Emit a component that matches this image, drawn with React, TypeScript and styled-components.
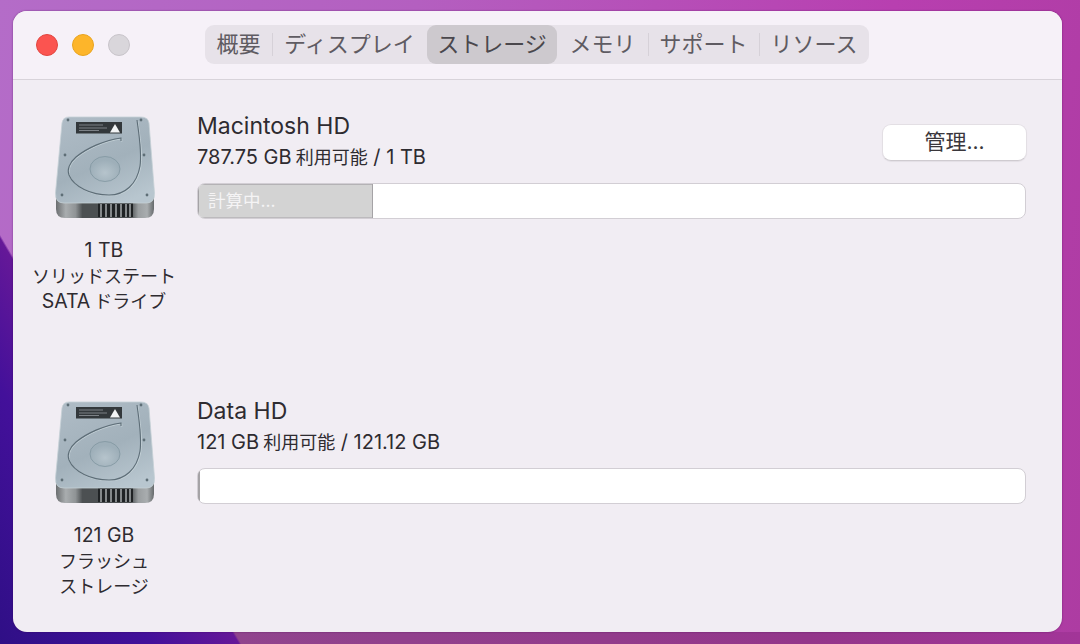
import React from "react";
import styled, { createGlobalStyle } from "styled-components";

const Global = createGlobalStyle`
  html, body { margin: 0; padding: 0; }
  body { font-family: Inter, "Noto Sans CJK JP", sans-serif; }
`;

const Page = styled.div`
  width: 1080px;
  height: 644px;
  box-sizing: border-box;
  padding: 11px 18px 12px 13px;
  overflow: hidden;
  background:
    linear-gradient(59.5deg, #2f0f86 0, #43109a 130px, #651898 206px, rgba(101, 24, 152, 0) 208px),
    linear-gradient(to right, #8f4a8e, #93368a 75%, #a23598) bottom / 100% 12px no-repeat,
    linear-gradient(100deg, #b46cc8 0%, #b45fc0 35%, #b83fb0 75%, #ad3ca2 100%);
`;

const Window = styled.div`
  height: 100%;
  border-radius: 14px;
  background: #f1edf3;
  overflow: hidden;
  box-shadow: 0 0 2px rgba(60, 0, 70, 0.55);
  color: #2e2b30;
`;

const TitleBar = styled.header`
  height: 69px;
  box-sizing: border-box;
  border-bottom: 1px solid #d8d3da;
  background: #f6f1f8;
  display: flex;
  align-items: flex-start;
  padding: 14px 0 0 23px;
`;

const Lights = styled.div`
  display: flex;
  gap: 14px;
  padding-top: 9px;
  margin-right: 75px;
`;

const Light = styled.span<{ $color: string; $edge: string }>`
  width: 22px;
  height: 22px;
  box-sizing: border-box;
  border-radius: 50%;
  background: ${(p) => p.$color};
  border: 1px solid ${(p) => p.$edge};
`;

const Tabs = styled.nav`
  display: flex;
  width: 664px;
  height: 39px;
  border-radius: 9px;
  background: #e7e2e9;
`;

const Tab = styled.div<{ $w: number; $active?: boolean; $sep?: boolean }>`
  position: relative;
  width: ${(p) => p.$w}px;
  box-sizing: border-box;
  padding-bottom: 5px;
  display: flex;
  align-items: center;
  justify-content: center;
  font-size: 22px;
  font-family: "Noto Sans CJK JP", sans-serif;
  color: ${(p) => (p.$active ? "#4a474c" : "#5f5b62")};
  border-radius: 9px;
  background: ${(p) => (p.$active ? "#cdc9ce" : "transparent")};
  &::before {
    content: "";
    display: ${(p) => (p.$sep ? "block" : "none")};
    position: absolute;
    left: 0;
    top: 8px;
    bottom: 8px;
    width: 1px;
    background: #d6d1d8;
  }
`;

const Content = styled.main`
  padding: 32px 36px 0 0;
`;

const Row = styled.section`
  height: 285px;
  display: flex;
`;

const DriveColumn = styled.div`
  width: 182px;
  margin-right: 2px;
  flex: none;
  display: flex;
  flex-direction: column;
  align-items: center;
  padding-top: 3px;
`;

const DriveLabel = styled.div`
  margin-top: 18px;
  font-size: 19.5px;
  line-height: 25.5px;
  text-align: center;
  color: #2e2b30;
`;

const Cjk = styled.span`
  font-family: "Noto Sans CJK JP", sans-serif;
  font-size: 18px;
  line-height: 1;
`;

const Info = styled.div`
  flex: 1;
`;

const Header = styled.div`
  height: 71px;
  display: flex;
  justify-content: space-between;
  align-items: flex-start;
`;

const Name = styled.div`
  font-size: 23px;
  line-height: 28px;
  color: #2e2b30;
`;

const Capacity = styled.div`
  margin-top: 3px;
  font-size: 20px;
  line-height: 28px;
  color: #2e2b30;
  white-space: nowrap;
`;

const ManageButton = styled.button`
  margin: 12px -1px 0 0;
  width: 145px;
  height: 37px;
  border: 1px solid #e3dfe4;
  border-bottom-color: #cfcbd0;
  border-radius: 9px;
  background: #ffffff;
  box-shadow: 0 1px 1px rgba(0, 0, 0, 0.06);
  font: inherit;
  font-size: 21px;
  color: #3a373c;
  padding: 0 0 5px;
`;

const Bar = styled.div`
  height: 36px;
  box-sizing: border-box;
  border: 1px solid #d2ced4;
  border-radius: 8px;
  background: #ffffff;
  overflow: hidden;
  display: flex;
`;

const BarFill = styled.div<{ $w: number; $color: string }>`
  width: ${(p) => p.$w}px;
  flex: none;
  box-sizing: border-box;
  background: ${(p) => p.$color};
  border-right: 1px solid #a5a3a6;
  box-shadow: inset 0 1px #b4b2b5, inset 1px 0 #a5a3a6, inset 0 -1px #bcbabd;
`;

const BarText = styled.div`
  padding-left: 10px;
  font-size: 17.5px;
  line-height: 33px;
  color: #f5f4f5;
  white-space: nowrap;
`;

const DriveSvg = styled.svg`
  width: 102px;
  height: 105px;
  flex: none;
  filter: blur(0.4px);
`;

function DriveIcon({ id }: { id: string }) {
  const screws: [number, number][] = [
    [69, 120], [142, 120], [66, 155], [145, 155], [63, 195], [148, 195],
  ];
  return (
    <DriveSvg viewBox="54 115 102 105" aria-hidden="true">
      <defs>
        <linearGradient id={`${id}-top`} x1="0.2" y1="0" x2="0.7" y2="1">
          <stop offset="0" stopColor="#aebbc5" />
          <stop offset="0.55" stopColor="#a2b1bb" />
          <stop offset="1" stopColor="#b8c6cf" />
        </linearGradient>
        <linearGradient id={`${id}-base`} x1="0" y1="0" x2="1" y2="0">
          <stop offset="0" stopColor="#6b6e70" />
          <stop offset="0.1" stopColor="#a9adaf" />
          <stop offset="0.2" stopColor="#8f9395" />
          <stop offset="0.27" stopColor="#4c5052" />
          <stop offset="0.76" stopColor="#4c5052" />
          <stop offset="0.84" stopColor="#9a9ea0" />
          <stop offset="0.93" stopColor="#a9adaf" />
          <stop offset="1" stopColor="#666a6c" />
        </linearGradient>
        <radialGradient id={`${id}-hub`} cx="0.5" cy="0.65">
          <stop offset="0" stopColor="#b6c4cc" />
          <stop offset="1" stopColor="#9eafb9" />
        </radialGradient>
      </defs>
      <path d="M57 194 L155 194 L155 209 Q155 218 146 218 L66 218 Q57 218 57 209 Z" fill={`url(#${id}-base)`} />
      <rect x="99" y="203" width="35" height="14" fill="#1f2224" />
      <g stroke="#a7abad" strokeWidth="1.5">
        {[102, 107, 112, 117, 122, 127, 131].map((x) => (
          <line key={x} x1={x} y1="204" x2={x} y2="217" />
        ))}
      </g>
      <path
        d="M70 117 L142 117 Q149 117 150 123 L155.5 193 Q156 203 147 203 L65 203 Q56 203 56.5 193 L63 123 Q64 117 70 117 Z"
        fill={`url(#${id}-top)`}
        stroke="#c5d1d6"
        strokeWidth="0.8"
      />
      <rect x="77" y="122" width="46" height="11.5" fill="#33383b" />
      <g stroke="#90959a" strokeWidth="0.8">
        <line x1="80" y1="125" x2="104" y2="125" />
        <line x1="80" y1="128" x2="108" y2="128" />
        <line x1="80" y1="130.5" x2="100" y2="130.5" />
      </g>
      <path d="M116 124 L121 132.5 L111 132.5 Z" fill="#f2f4f5" />
      <path
        d="M122 141 L122 138 C106 140 88 148 77 157 C70 163 68 170 70 175 C75 187 92 195 110 195 C126 195 138 184 141 166 C143 152 140 135 138 120"
        fill="none"
        stroke="#c3d0d6"
        strokeWidth="1"
        transform="translate(0.8 0.8)"
      />
      <path
        d="M122 141 L122 138 C106 140 88 148 77 157 C70 163 68 170 70 175 C75 187 92 195 110 195 C126 195 138 184 141 166 C143 152 140 135 138 120"
        fill="none"
        stroke="#5d6d77"
        strokeWidth="1.1"
      />
      <ellipse cx="106" cy="169" rx="15" ry="12.5" fill={`url(#${id}-hub)`} stroke="#8096a0" strokeWidth="0.8" />
      {screws.map(([x, y]) => (
        <circle key={`${x}-${y}`} cx={x} cy={y} r="1.4" fill="#5e6e76" />
      ))}
    </DriveSvg>
  );
}

const tabs = [
  { label: "概要", w: 67 },
  { label: "ディスプレイ", w: 155, sep: true },
  { label: "ストレージ", w: 130, active: true },
  { label: "メモリ", w: 91 },
  { label: "サポート", w: 111, sep: true },
  { label: "リソース", w: 110, sep: true },
];

export default function App() {
  return (
    <Page>
      <Global />
      <Window>
        <TitleBar>
          <Lights>
            <Light $color="#fb5450" $edge="#e2453f" />
            <Light $color="#fdb52a" $edge="#e9a41f" />
            <Light $color="#d9d6db" $edge="#c8c4ca" />
          </Lights>
          <Tabs>
            {tabs.map((t) => (
              <Tab key={t.label} $w={t.w} $active={t.active} $sep={t.sep}>
                {t.label}
              </Tab>
            ))}
          </Tabs>
        </TitleBar>
        <Content>
          <Row>
            <DriveColumn>
              <DriveIcon id="mac" />
              <DriveLabel>
                1 TB
                <br />
                <Cjk>ソリッドステート</Cjk>
                <br />
                SATA<Cjk> ドライブ</Cjk>
              </DriveLabel>
            </DriveColumn>
            <Info>
              <Header>
                <div>
                  <Name>Macintosh HD</Name>
                  <Capacity>787.75 GB<Cjk> 利用可能</Cjk> / 1 TB</Capacity>
                </div>
                <ManageButton>管理...</ManageButton>
              </Header>
              <Bar>
                <BarFill $w={175} $color="#d3d3d3">
                  <BarText>計算中...</BarText>
                </BarFill>
              </Bar>
            </Info>
          </Row>
          <Row>
            <DriveColumn>
              <DriveIcon id="data" />
              <DriveLabel>
                121 GB
                <br />
                <Cjk>フラッシュ</Cjk>
                <br />
                <Cjk>ストレージ</Cjk>
              </DriveLabel>
            </DriveColumn>
            <Info>
              <Header>
                <div>
                  <Name>Data HD</Name>
                  <Capacity>121 GB<Cjk> 利用可能</Cjk> / 121.12 GB</Capacity>
                </div>
              </Header>
              <Bar>
                <BarFill $w={2} $color="#8d8b8e" />
              </Bar>
            </Info>
          </Row>
        </Content>
      </Window>
    </Page>
  );
}
